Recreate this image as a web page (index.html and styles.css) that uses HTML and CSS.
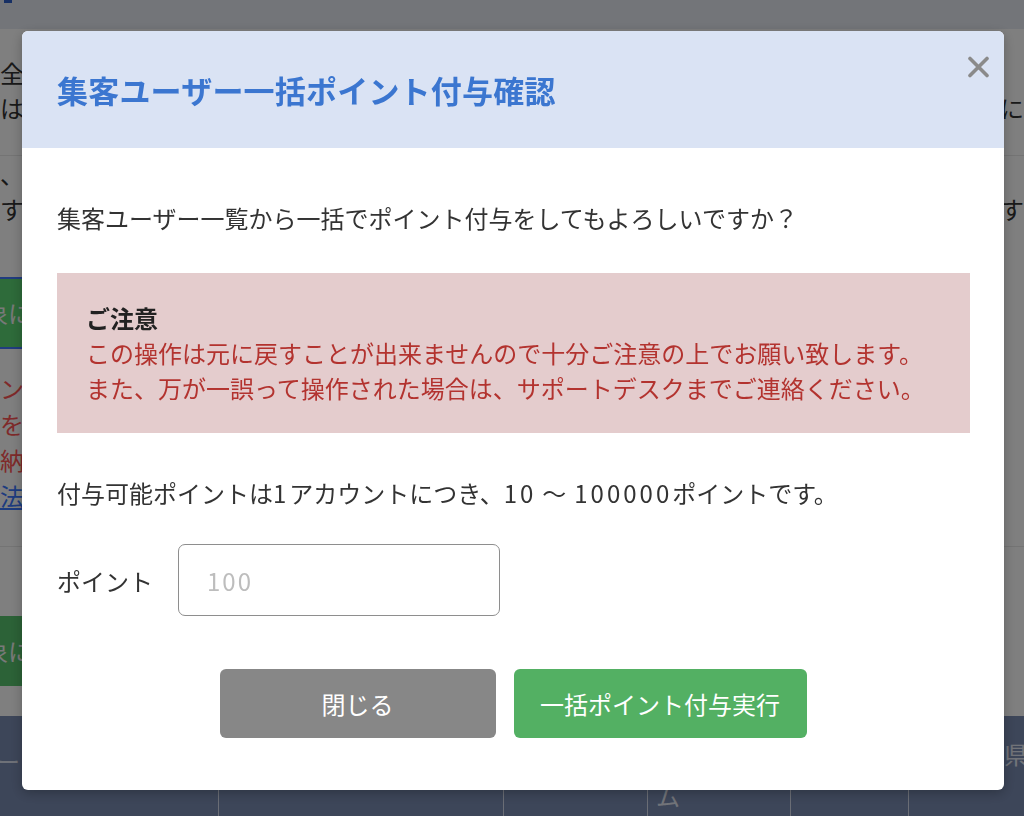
FILE: index.html
```html
<!DOCTYPE html>
<html lang="ja">
<head>
  <meta charset="UTF-8" />
  <meta name="viewport" content="width=device-width, initial-scale=1.0"/>
  <title>集客ユーザー一括ポイント付与確認</title>
  <link rel="stylesheet" href="styles.css">
</head>
<body>
  <div class="page">
    <header class="site-header"><span class="logo-mark"></span></header>

    <section class="block block-intro">
      <div class="line"><span>全ての集客ユーザーへポイントを付与できます。</span><span></span></div>
      <div class="line"><span>はじめに対象を確認してください。</span><span>に</span></div>
    </section>

    <section class="block block-main">
      <div class="line"><span>、</span><span></span></div>
      <div class="line"><span>すべてのユーザーが対象となります。</span><span>す</span></div>
      <div class="action-row"><span class="green-btn">対象にポイント付与</span></div>
      <div class="notes">
        <p class="note-red">ンのユーザーは対象外です。</p>
        <p class="note-red">を行う前に必ずご確認ください。</p>
        <p class="note-red">納品後のポイントは取り消せません。</p>
        <p><a href="#" class="note-link">法人アカウントの方法はこちら</a></p>
      </div>
    </section>

    <section class="block block-sub">
      <div class="action-row"><span class="green-btn">対象に一括付与</span></div>
    </section>

    <footer class="site-footer">
      <div class="foot-col"><span class="foot-dash">ー</span></div>
      <div class="foot-col"></div>
      <div class="foot-col"></div>
      <div class="foot-col"><span class="foot-text foot-low">ム</span></div>
      <div class="foot-col"></div>
      <div class="foot-col foot-end"><span class="foot-text">県</span></div>
    </footer>
  </div>

  <div class="overlay"></div>

  <div class="modal-wrap">
    <div class="modal">
      <div class="modal-header">
        <h2 class="modal-title">集客ユーザー一括ポイント付与確認</h2>
        <button class="modal-close" aria-label="閉じる">
          <svg width="23" height="22" viewBox="0 0 23 22">
            <path d="M3 2.5 L20 19.5 M20 2.5 L3 19.5" stroke="#8a8a8a" stroke-width="3.6" stroke-linecap="round" fill="none"/>
          </svg>
        </button>
      </div>

      <div class="modal-body">
        <p class="question">集客ユーザー一覧から一括でポイント付与をしてもよろしいですか？</p>

        <div class="alert">
          <p class="alert-title">ご注意</p>
          <p class="alert-text">この操作は元に戻すことが出来ませんので十分ご注意の上でお願い致します。</p>
          <p class="alert-text">また、万が一誤って操作された場合は、サポートデスクまでご連絡ください。</p>
        </div>

        <p class="range">付与可能ポイントは<span class="num">1</span>アカウントにつき、<span class="num">10</span><span class="tilde">〜</span><span class="num">100000</span>ポイントです。</p>

        <div class="field">
          <label for="point">ポイント</label>
          <input type="text" id="point" placeholder="100" />
        </div>

        <div class="actions">
          <button class="btn btn-close">閉じる</button>
          <button class="btn btn-run">一括ポイント付与実行</button>
        </div>
      </div>
    </div>
  </div>
</body>
</html>
```

FILE: styles.css
```css
body {
  margin: 0;
  font-family: "Noto Sans CJK JP", "Noto Sans", sans-serif;
  font-size: 24px;
  color: #333;
  background: #fff;
  overflow: hidden;
}
p {
  margin: 0;
}

/* page behind the modal */
.page {
  min-height: 816px;
  display: flex;
  flex-direction: column;
}
.site-header {
  height: 29px;
  background: #e6eaf2;
}
.logo-mark {
  display: block;
  width: 8px;
  height: 3px;
  margin-left: 4px;
  background: #2c5fc8;
}
.block {
  border-bottom: 1px solid #e8e8e8;
  line-height: 35px;
}
.line {
  display: flex;
  justify-content: space-between;
  white-space: nowrap;
  overflow: hidden;
}
.block-intro {
  padding: 26px 0 30px;
}
.block-main {
  padding: 0 0 32px;
}
.action-row {
  border-top: 2px solid #4278ff;
  border-bottom: 2px solid #4278ff;
  margin-top: 51px;
  width: 300px;
}
.green-btn {
  display: block;
  height: 68px;
  line-height: 68px;
  background: #5cd674;
  color: #f2f2f2;
  text-indent: -40px;
  white-space: nowrap;
  overflow: hidden;
}
.notes {
  margin-top: 21px;
  line-height: 36px;
}
.note-red {
  color: #ff5555;
  white-space: nowrap;
}
.note-link {
  color: #3c78ff;
}
.block-sub {
  flex: 1;
  border-bottom: none;
  padding-top: 69px;
}
.block-sub .action-row {
  border: none;
  margin: 0;
}
.block-sub .green-btn {
  height: 70px;
  line-height: 70px;
  background: #58c46e;
}
.site-footer {
  height: 100px;
  background: #7a8cb2;
  display: flex;
  color: #eef2fa;
}
.foot-col {
  box-sizing: border-box;
  border-left: 1px solid #d6dcec;
}
.foot-col:nth-child(1) { width: 218px; border-left: none; }
.foot-col:nth-child(2) { width: 285px; }
.foot-col:nth-child(3) { width: 144px; }
.foot-col:nth-child(4) { width: 143px; }
.foot-col:nth-child(5) { width: 118px; }
.foot-end { flex: 1; text-align: right; }
.foot-dash {
  display: block;
  margin-top: 27px;
  margin-left: -4px;
  color: #dde3f0;
}
.foot-text {
  display: block;
  margin-top: 20px;
  margin-right: -4px;
  color: #e4e8f2;
}
.foot-low {
  margin-top: 62px;
  margin-left: 8px;
}

/* dim layer */
.overlay {
  position: fixed;
  inset: 0;
  background: rgba(0, 0, 0, 0.5);
}

/* modal */
.modal-wrap {
  position: fixed;
  inset: 0;
  padding: 31px 20px 0 22px;
}
.modal {
  width: 982px;
  height: 759px;
  background: #fff;
  border-radius: 6px;
  overflow: hidden;
  box-shadow: 0 3px 12px rgba(0, 0, 0, 0.25);
}
.modal-header {
  height: 117px;
  background: #dae3f4;
  display: flex;
  justify-content: space-between;
  align-items: center;
  padding: 0 14px 0 35px;
}
.modal-title {
  margin: 0;
  font-size: 31px;
  font-weight: bold;
  color: #3b76d0;
  letter-spacing: 0.2px;
}
.modal-close {
  align-self: flex-start;
  margin-top: 25px;
  background: none;
  border: none;
  padding: 0;
  cursor: pointer;
}
.modal-body {
  padding: 52px 34px 0 35px;
  line-height: 35px;
}
.question {
  margin-bottom: 38px;
}
.alert {
  background: #e4cccd;
  padding: 27px 29px 28px;
  line-height: 35px;
}
.alert-title {
  font-weight: bold;
  color: #222;
}
.alert-text {
  color: #b3332f;
}
.range {
  margin-top: 42px;
}
.num {
  letter-spacing: 3px;
}
.tilde {
  margin: 0 8px 0 6px;
}
.field {
  display: flex;
  align-items: center;
  gap: 28px;
  margin-top: 34px;
}
.field label {
  width: 93px;
  white-space: nowrap;
}
.field input {
  width: 322px;
  height: 72px;
  box-sizing: border-box;
  border: 1.5px solid #8e8e8e;
  border-radius: 7px;
  padding: 0 28px;
  font-family: inherit;
  font-size: 24px;
  letter-spacing: 2px;
  color: #333;
  outline: none;
}
.field input::placeholder {
  color: #bdbdbd;
}
.actions {
  display: flex;
  justify-content: center;
  gap: 18px;
  margin-top: 53px;
  padding-right: 1px;
}
.btn {
  height: 69px;
  border: none;
  border-radius: 6px;
  color: #fff;
  font-family: inherit;
  font-size: 24px;
  cursor: pointer;
}
.btn-close {
  width: 276px;
  background: #878787;
}
.btn-run {
  width: 293px;
  background: #53b063;
}
```
